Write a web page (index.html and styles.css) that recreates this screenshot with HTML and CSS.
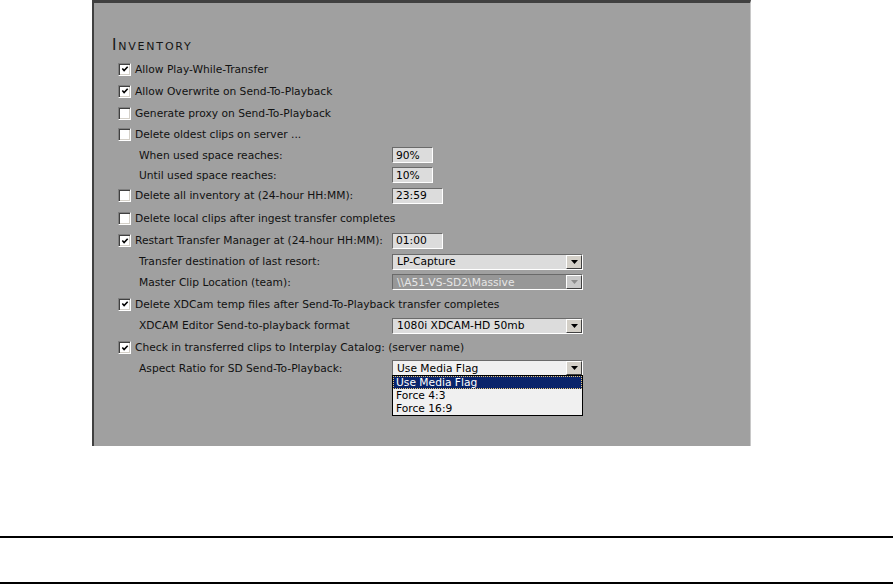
FILE: index.html
```html
<!DOCTYPE html>
<html lang="en">
<head>
    <meta charset="UTF-8">
    <title>Inventory Settings</title>
    <link rel="stylesheet" href="styles.css">
</head>
<body>
    <div class="panel">
        <h2 class="section-title">Inventory</h2>
        <div class="options">
            <div class="row">
                <label class="check"><span class="box"><svg viewBox="0 0 9 9"><polyline points="1.5,4 3.5,6.2 7.5,2"/></svg></span>Allow Play-While-Transfer</label>
            </div>
            <div class="row">
                <label class="check"><span class="box"><svg viewBox="0 0 9 9"><polyline points="1.5,4 3.5,6.2 7.5,2"/></svg></span>Allow Overwrite on Send-To-Playback</label>
            </div>
            <div class="row">
                <label class="check"><span class="box"></span>Generate proxy on Send-To-Playback</label>
            </div>
            <div class="row r21">
                <label class="check"><span class="box"></span>Delete oldest clips on server ...</label>
            </div>
            <div class="row r20 sub">
                <span class="label">When used space reaches:</span>
                <input class="field" type="text" value="90%">
            </div>
            <div class="row r20 sub">
                <span class="label">Until used space reaches:</span>
                <input class="field" type="text" value="10%">
            </div>
            <div class="row r21">
                <label class="check label"><span class="box"></span>Delete all inventory at (24-hour HH:MM):</label>
                <input class="field wide" type="text" value="23:59">
            </div>
            <div class="row r24">
                <label class="check"><span class="box"></span>Delete local clips after ingest transfer completes</label>
            </div>
            <div class="row r21">
                <label class="check label"><span class="box"><svg viewBox="0 0 9 9"><polyline points="1.5,4 3.5,6.2 7.5,2"/></svg></span>Restart Transfer Manager at (24-hour HH:MM):</label>
                <input class="field wide" type="text" value="01:00">
            </div>
            <div class="row r21 sub">
                <span class="label">Transfer destination of last resort:</span>
                <div class="select">
                    <span class="value">LP-Capture</span>
                    <span class="arrow"><svg viewBox="0 0 7 4"><polygon points="0,0 7,0 3.5,4"/></svg></span>
                </div>
            </div>
            <div class="row r20 sub">
                <span class="label">Master Clip Location (team):</span>
                <div class="select disabled">
                    <span class="value">\\A51-VS-SD2\Massive</span>
                    <span class="arrow"><svg viewBox="0 0 7 4"><polygon points="0,0 7,0 3.5,4"/></svg></span>
                </div>
            </div>
            <div class="row r24">
                <label class="check"><span class="box"><svg viewBox="0 0 9 9"><polyline points="1.5,4 3.5,6.2 7.5,2"/></svg></span>Delete XDCam temp files after Send-To-Playback transfer completes</label>
            </div>
            <div class="row r19 sub">
                <span class="label">XDCAM Editor Send-to-playback format</span>
                <div class="select">
                    <span class="value">1080i XDCAM-HD 50mb</span>
                    <span class="arrow"><svg viewBox="0 0 7 4"><polygon points="0,0 7,0 3.5,4"/></svg></span>
                </div>
            </div>
            <div class="row r25">
                <label class="check"><span class="box"><svg viewBox="0 0 9 9"><polyline points="1.5,4 3.5,6.2 7.5,2"/></svg></span>Check in transferred clips to Interplay Catalog: (server name)</label>
            </div>
            <div class="row r16 sub">
                <span class="label">Aspect Ratio for SD Send-To-Playback:</span>
                <div class="select open">
                    <span class="value">Use Media Flag</span>
                    <span class="arrow"><svg viewBox="0 0 7 4"><polygon points="0,0 7,0 3.5,4"/></svg></span>
                    <ul class="dropdown-list">
                        <li class="selected">Use Media Flag</li>
                        <li>Force 4:3</li>
                        <li>Force 16:9</li>
                    </ul>
                </div>
            </div>
        </div>
    </div>

    <div class="page-rules">
        <div class="rule"></div>
        <div class="rule"></div>
    </div>
</body>
</html>
```

FILE: styles.css
```css
body {
    margin: 0;
    background: #fff;
    color: #111;
    font-family: "DejaVu Sans", Verdana, sans-serif;
    font-size: 10.7px;
}

.panel {
    box-sizing: border-box;
    width: 659px;
    height: 446px;
    margin-left: 92px;
    padding-top: 33px;
    background: #a0a0a0;
    border-top: 3px solid #404040;
    border-left: 2px solid #404040;
    border-right: 1px solid #c8c8c8;
}

.section-title {
    margin: 0 0 4px 18px;
    font-size: 15px;
    line-height: 18px;
    font-weight: normal;
    font-variant: small-caps;
    letter-spacing: 1.8px;
    color: #151515;
}

.options {
    margin-left: 24px;
}

.row {
    display: flex;
    align-items: center;
    height: 22px;
    white-space: nowrap;
}

.row.r16 { height: 16px; }
.row.r19 { height: 19px; }
.row.r20 { height: 20px; }
.row.r21 { height: 21px; }
.row.r24 { height: 24px; }
.row.r25 { height: 25px; }

.check {
    display: flex;
    align-items: center;
}

.label {
    box-sizing: border-box;
    flex: none;
    width: 274px;
}

.sub .label {
    padding-left: 21px;
}

/* sunken classic checkbox */
.box {
    box-sizing: border-box;
    display: flex;
    align-items: center;
    justify-content: center;
    width: 13px;
    height: 13px;
    margin-right: 4px;
    background: #fff;
    border: 1px solid;
    border-color: #808080 #fff #fff #808080;
    box-shadow: inset 1px 1px #404040, inset -1px -1px #d4d0c8;
}

.box svg {
    width: 8px;
    height: 8px;
}

.box polyline {
    fill: none;
    stroke: #000;
    stroke-width: 1.8;
}

.field {
    box-sizing: border-box;
    width: 41px;
    height: 16px;
    margin: 0;
    padding: 0 3px;
    font: inherit;
    color: #000;
    background: #dcdcdc;
    border: 1px solid;
    border-color: #6a6a6a #fff #fff #6a6a6a;
    outline: none;
}

.field.wide {
    width: 51px;
}

.select {
    position: relative;
    box-sizing: border-box;
    display: flex;
    align-items: center;
    width: 191px;
    height: 16px;
    color: #000;
    background: #dcdcdc;
    border: 1px solid;
    border-color: #6a6a6a #fff #fff #6a6a6a;
}

.select .value {
    flex: 1;
    padding-left: 4px;
}

.select .arrow {
    box-sizing: border-box;
    display: flex;
    align-items: center;
    justify-content: center;
    width: 16px;
    height: 14px;
    background: #d4d0c8;
    border: 1px solid;
    border-color: #fff #404040 #404040 #fff;
}

.select .arrow svg {
    width: 7px;
    height: 4px;
    fill: #000;
}

.select.disabled {
    color: #e6e6e6;
    background: #979797;
}

.select.disabled .arrow {
    background: #c8c8c8;
}

.select.disabled .arrow svg {
    fill: #8c8c8c;
}

.select.open {
    background: #f0f0f0;
}

.dropdown-list {
    position: absolute;
    top: 14px;
    left: -1px;
    width: 191px;
    box-sizing: border-box;
    margin: 0;
    padding: 0;
    list-style: none;
    background: #f0f0f0;
    border: 1px solid #000;
}

.dropdown-list li {
    height: 13px;
    line-height: 13px;
    padding-left: 3px;
}

.dropdown-list li.selected {
    color: #fff;
    background: #0a246a;
    outline: 1px dotted #e8c878;
    outline-offset: -1px;
}

.page-rules {
    margin-top: 90px;
}

.rule {
    border-top: 2px solid #000;
}

.rule + .rule {
    margin-top: 44px;
}
```
